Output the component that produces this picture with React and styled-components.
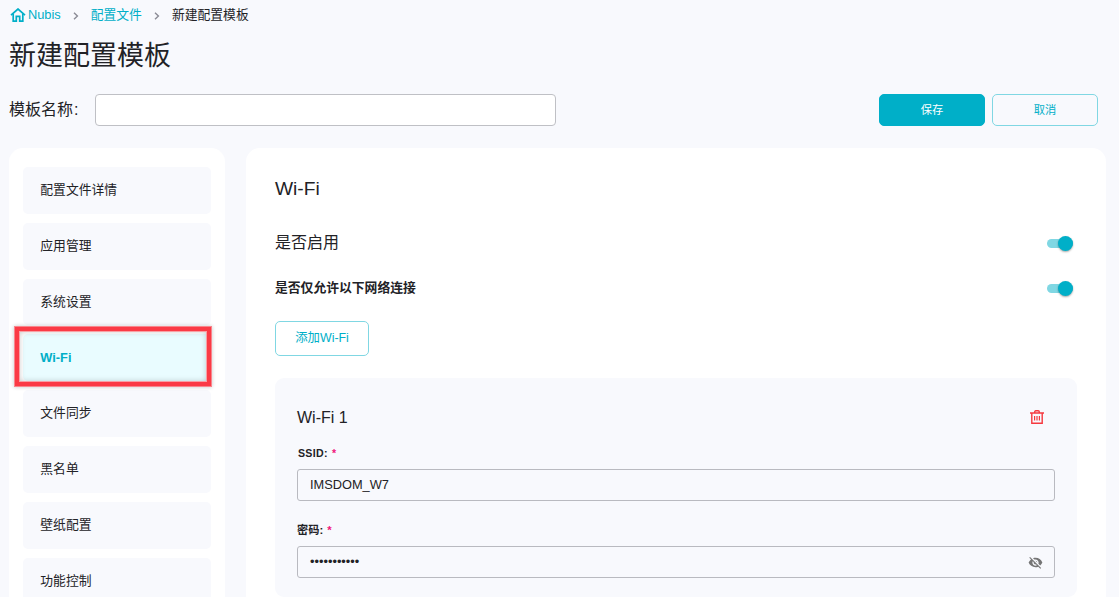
import React, { useState } from 'react'
import styled, { createGlobalStyle } from 'styled-components';

const menuItems = ['配置文件详情', '应用管理', '系统设置', 'Wi-Fi', '文件同步', '黑名单', '壁纸配置', '功能控制']

const HomeIcon = () => (
  <svg width="16" height="14" viewBox="0 0 16 14" fill="none" stroke="#00afc8" strokeWidth="1.7">
    <path d="M1 7.2 8 1l7 6.2" />
    <path d="M3.2 5.8v7.3h3.1V8.4h3.4v4.7h3.1V5.8" />
  </svg>
)

const Chevron = () => (
  <svg width="6" height="8" viewBox="0 0 6 8" fill="none" stroke="#8b8b95" strokeWidth="1.4">
    <path d="M1 .8 4.4 4 1 7.2" />
  </svg>
)

const TrashIcon = () => (
  <svg width="14" height="14" viewBox="0 0 14 14" fill="none" stroke="#f5383f" strokeWidth="1.4">
    <path d="M0 3h14M4.7 2.8V2Q4.7.8 5.8.8h2.4q1.1 0 1.1 1.2v.8M1.8 3v10.2h10.4V3" />
    <path d="M4.6 6v4.6M7 6v4.6M9.4 6v4.6" strokeWidth="1.2" />
  </svg>
)

const EyeOffIcon = () => (
  <svg width="15" height="15" viewBox="0 0 24 24" fill="#757575">
    <path d="M12 7c2.76 0 5 2.24 5 5 0 .65-.13 1.26-.36 1.83l2.92 2.92c1.51-1.26 2.7-2.89 3.43-4.75-1.73-4.39-6-7.5-11-7.5-1.4 0-2.74.25-3.98.7l2.16 2.16C10.74 7.13 11.35 7 12 7zM2 4.27l2.28 2.28.46.46C3.08 8.3 1.78 10.02 1 12c1.73 4.39 6 7.5 11 7.5 1.55 0 3.03-.3 4.38-.84l.42.42L19.73 22 21 20.73 3.27 3 2 4.27zM7.53 9.8l1.55 1.55c-.05.21-.08.43-.08.65 0 1.66 1.34 3 3 3 .22 0 .44-.03.65-.08l1.55 1.55c-.67.33-1.41.53-2.2.53-2.76 0-5-2.24-5-5 0-.79.2-1.53.53-2.2zm4.31-.78 3.15 3.15.02-.16c0-1.66-1.34-3-3-3l-.17.01z" />
  </svg>
)

function App() {
  const [name, setName] = useState('')
  const [enabled, setEnabled] = useState(true)
  const [onlyListed, setOnlyListed] = useState(true)
  const [ssid, setSsid] = useState('IMSDOM_W7')

  return (
    <Page>
      <GlobalStyle />
      <Breadcrumb>
        <HomeIcon />
        <HomeLink href="#">Nubis</HomeLink>
        <Chevron />
        <CrumbLink href="#">配置文件</CrumbLink>
        <Chevron />
        <span>新建配置模板</span>
      </Breadcrumb>
      <Title>新建配置模板</Title>

      <Toolbar>
        <NameLabel htmlFor="name">模板名称<Colon>:</Colon></NameLabel>
        <NameInput id="name" value={name} onChange={e => setName(e.target.value)} />
        <Actions>
          <Button $primary>保存</Button>
          <Button>取消</Button>
        </Actions>
      </Toolbar>

      <Columns>
        <Sidebar>
          {menuItems.map(item => (
            <MenuItem key={item} $active={item === 'Wi-Fi'}>
              {item}
              {item === 'Wi-Fi' && <Highlight />}
            </MenuItem>
          ))}
        </Sidebar>

        <Panel>
          <PanelTitle>Wi-Fi</PanelTitle>
          <SettingRow $height={46}>
            <SettingName>是否启用</SettingName>
            <Switch $on={enabled} onClick={() => setEnabled(!enabled)} />
          </SettingRow>
          <SettingRow $height={44}>
            <SettingName $bold>是否仅允许以下网络连接</SettingName>
            <Switch $on={onlyListed} onClick={() => setOnlyListed(!onlyListed)} />
          </SettingRow>
          <AddButton>添加Wi-Fi</AddButton>

          <NetworkCard>
            <CardHead>
              <CardTitle>Wi-Fi 1</CardTitle>
              <TrashIcon />
            </CardHead>
            <FieldLabel $spaced>SSID: <Required>*</Required></FieldLabel>
            <Field>
              <FieldInput value={ssid} onChange={e => setSsid(e.target.value)} />
            </Field>
            <FieldLabel>密码: <Required>*</Required></FieldLabel>
            <Field>
              <Password>•••••••••••</Password>
              <EyeOffIcon />
            </Field>
          </NetworkCard>
        </Panel>
      </Columns>
    </Page>
  )
}

const GlobalStyle = createGlobalStyle`
* {
  box-sizing: border-box;
}
body {
  margin: 0;
  background: #f8f9fd;
  overflow: hidden;
}
input, button {
  font-family: inherit;
}
`;

const Page = styled.div`
  height: 597px;
  overflow: hidden;
  padding: 4px 13px 0 9px;
  color: #222226;
  background: #f8f9fd;
  font-family: 'Liberation Sans', 'Noto Sans CJK SC', sans-serif;
  font-size: 12.8px;
`;

const Breadcrumb = styled.nav`
  display: flex;
  align-items: center;
  height: 19px;
  padding-left: 1px;
  white-space: nowrap;
  svg:not(:first-child) {
    margin: 4px 12px 0;
  }
  svg:first-child {
    margin: 3px 2px 0 0;
  }
`;

const CrumbLink = styled.a`
  color: #00afc8;
  text-decoration: none;
`;

const HomeLink = styled(CrumbLink)`
  padding-top: 2px;
`;

const Title = styled.h1`
  margin: 12px 0 0;
  height: 42px;
  line-height: 42px;
  font-size: 27px;
  font-weight: 400;
`;

const Toolbar = styled.div`
  display: flex;
  align-items: center;
  height: 32px;
  margin-top: 17px;
`;

const NameLabel = styled.label`
  width: 86px;
  font-size: 16px;
  line-height: 30px;
`;

const Colon = styled.span`
  margin-left: 1px;
`;

const NameInput = styled.input`
  width: 461px;
  height: 32px;
  border: 1px solid #bfc0c5;
  border-radius: 4px;
  background: #fff;
  padding: 0 12px;
  outline: none;
`;

const Actions = styled.div`
  display: flex;
  gap: 7px;
  margin-left: auto;
  margin-right: 8px;
`;

const Button = styled.button`
  width: 106px;
  height: 32px;
  padding: 0 0 2px;
  border: 1px solid ${props => props.$primary ? '#00afc8' : '#80d7e3'};
  border-radius: 5px;
  background: ${props => props.$primary ? '#00afc8' : 'transparent'};
  color: ${props => props.$primary ? '#fff' : '#00afc8'};
  font-size: 11.3px;
  cursor: pointer;
`;

const Columns = styled.div`
  display: flex;
  gap: 21px;
  margin-top: 22px;
`;

const Sidebar = styled.aside`
  display: flex;
  flex-direction: column;
  gap: 9px;
  width: 216px;
  height: 500px;
  padding: 19px 14px 0;
  background: #fff;
  border-radius: 14px;
`;

const MenuItem = styled.div`
  position: relative;
  flex: none;
  height: 46.8px;
  line-height: ${props => props.$active ? 48 : 46}px;
  padding-left: 17.3px;
  border-radius: 5px;
  background: ${props => props.$active ? '#e9fcff' : '#f8f9fd'};
  color: ${props => props.$active ? '#00afc8' : '#222226'};
  font-weight: ${props => props.$active ? 700 : 400};
`;

const Highlight = styled.span`
  position: absolute;
  z-index: 1;
  top: -8px;
  left: -9px;
  width: 198px;
  height: 61px;
  border: 5px solid #fb3a45;
  outline: 1px solid #f8868d;
  outline-offset: -1px;
  box-shadow: 0 0 4px rgba(0, 0, 0, 0.22), inset 0 0 0 1px #f8a0a5, inset 0 0 6px rgba(0, 0, 0, 0.25);
`;

const Panel = styled.main`
  flex: 1;
  height: 500px;
  padding: 26px 29px 0;
  background: #fff;
  border-radius: 14px;
`;

const PanelTitle = styled.h2`
  margin: 0 0 16px;
  height: 30px;
  line-height: 30px;
  font-size: 19.2px;
  font-weight: 400;
`;

const SettingRow = styled.div`
  display: flex;
  align-items: center;
  justify-content: space-between;
  height: ${props => props.$height}px;
  padding-right: 4px;
`;

const SettingName = styled.span`
  padding-bottom: 4px;
  font-size: ${props => props.$bold ? 12.8 : 16}px;
  font-weight: ${props => props.$bold ? 700 : 400};
`;

const Switch = styled.button`
  display: flex;
  align-items: center;
  justify-content: ${props => props.$on ? 'flex-end' : 'flex-start'};
  width: 26px;
  height: 9px;
  padding: 0;
  border: none;
  border-radius: 5px;
  background: ${props => props.$on ? '#80d7e3' : '#bbb'};
  cursor: pointer;
  &::after {
    content: '';
    flex: none;
    width: 15px;
    height: 15px;
    border-radius: 50%;
    background: ${props => props.$on ? '#00afc8' : '#fff'};
    box-shadow: 0 1px 2px rgba(0, 0, 0, 0.35);
  }
`;

const AddButton = styled.button`
  display: block;
  width: 94px;
  height: 35px;
  margin-top: 11px;
  padding: 0 0 3px;
  border: 1px solid #80d7e3;
  border-radius: 5px;
  background: #fff;
  color: #00afc8;
  font-size: 12.4px;
  cursor: pointer;
`;

const NetworkCard = styled.section`
  height: 219px;
  margin-top: 22px;
  padding: 24px 22px 0;
  border-radius: 9px;
  background: #f8f9fd;
`;

const CardHead = styled.div`
  display: flex;
  align-items: center;
  justify-content: space-between;
  height: 30px;
  padding-right: 11px;
`;

const CardTitle = styled.h3`
  margin: 0;
  padding-top: 2px;
  font-size: 16px;
  font-weight: 400;
`;

const FieldLabel = styled.div`
  height: 17px;
  margin: 13px 0 7px;
  padding-left: ${props => props.$spaced ? '1px' : '0'};
  line-height: 17px;
  font-size: ${props => props.$spaced ? '10.6px' : '11.2px'};
  font-weight: 700;
  letter-spacing: ${props => props.$spaced ? '0.3px' : '0'};
`;

const Required = styled.span`
  margin-left: 1px;
  color: #f0147a;
`;

const Field = styled.div`
  display: flex;
  align-items: center;
  justify-content: space-between;
  height: 32px;
  margin-bottom: 21px;
  padding: 0 11px 0 12px;
  border: 1px solid #b9bac0;
  border-radius: 3px;
`;

const FieldInput = styled.input`
  flex: 1;
  padding: 0 0 1px;
  border: none;
  outline: none;
  background: transparent;
  color: #222226;
  font-size: 12.8px;
`;

const Password = styled.span`
  padding-bottom: 1px;
  font-size: 12.8px;
`;

export default App
